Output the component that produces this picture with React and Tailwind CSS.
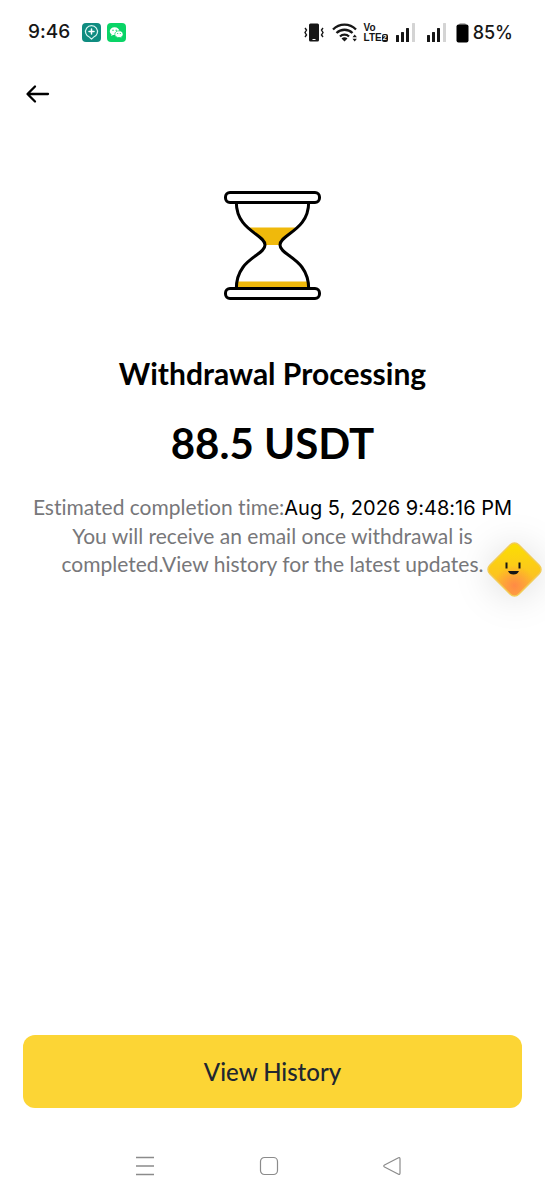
import React from 'react';

const withdrawal = {
    amount: '88.5',
    coin: 'USDT',
    completesAt: 'Aug 5, 2026 9:48:16 PM',
};

function SignalBars() {
    return (
        <svg width="19" height="19" viewBox="0 0 19 19" aria-hidden="true">
            <rect x="0" y="12" width="3" height="7" rx="0.5" fill="#161616" />
            <rect x="5" y="9" width="3" height="10" rx="0.5" fill="#161616" />
            <rect x="10" y="5" width="3" height="14" rx="0.5" fill="#161616" />
            <rect x="16" y="0" width="3" height="19" rx="0.5" fill="#d4d4d4" />
        </svg>
    );
}

function StatusBar() {
    return (
        <div className="flex h-16 items-center justify-between pt-px pl-7 pr-8 font-[Inter,sans-serif] text-[#161616]">
            <div className="flex items-center">
                <span className="text-[19px] font-medium">9:46</span>
                <svg className="ml-3" width="19" height="19" viewBox="0 0 19 19" aria-hidden="true">
                    <rect width="19" height="19" rx="4" fill="#0f8c80" />
                    <path d="M7.6 14.3A6 6 0 1 1 11.4 14.3L9.5 16.2Z" fill="none" stroke="#d9f5f1" strokeWidth="1.2" strokeLinejoin="round" />
                    <path d="M9.5 6v5M7 8.5h5" stroke="#fff" strokeWidth="1.5" strokeLinecap="round" />
                </svg>
                <svg className="ml-1.5" width="19" height="19" viewBox="0 0 19 19" aria-hidden="true">
                    <rect width="19" height="19" rx="4" fill="#09d466" />
                    <path d="M7.6 4.2c-2.8 0-4.8 1.7-4.8 4 0 1.3.7 2.4 1.8 3.1l-.5 1.6 1.9-1c.5.2 1 .2 1.6.2 2.7 0 4.8-1.7 4.8-3.9s-2-4-4.8-4Z" fill="#fff" />
                    <path d="M12 7.800c-2.400 0-4.200 1.500-4.200 3.400s1.800 3.400 4.200 3.400c.5 0 .9-.1 1.300-.2l1.600.8-.4-1.400c1-.6 1.600-1.500 1.600-2.600 0-1.900-1.800-3.400-4.100-3.400Z" fill="#fff" stroke="#09d466" strokeWidth="0.7" />
                    <circle cx="6" cy="7.3" r="0.7" fill="#09d466" />
                    <circle cx="9.2" cy="7.3" r="0.7" fill="#09d466" />
                    <circle cx="10.7" cy="10.5" r="0.6" fill="#09d466" />
                    <circle cx="13.3" cy="10.5" r="0.6" fill="#09d466" />
                </svg>
            </div>

            <div className="flex items-center">
                {/* vibrate */}
                <svg width="20" height="19" viewBox="0 0 20 19" aria-hidden="true">
                    <rect x="5" y="0.5" width="10" height="18" rx="1.5" fill="#161616" />
                    <path d="M8.500 16.500h3" stroke="#fff" strokeWidth="1" />
                    <path d="M1 5l1.500 2L1 9.500 2.500 12 1 14M19 5l-1.500 2L19 9.500 17.500 12 19 14" fill="none" stroke="#161616" strokeWidth="1.4" />
                </svg>
                <svg className="ml-2" width="26" height="19" viewBox="0 0 26 19" aria-hidden="true">
                    <g fill="none" stroke="#161616" strokeWidth="2.3">
                        <path d="M1 6.500a16 16 0 0 1 23 0" />
                        <path d="M4.500 10a11.500 11.500 0 0 1 16 0" />
                        <path d="M8 13.500a6.500 6.500 0 0 1 9 0" />
                    </g>
                    <path d="M9.500 15.500a4 4 0 0 1 6 0L12.500 18.500Z" fill="#161616" />
                    <path d="M20.500 14.300l2.200-2.800 2.200 2.800ZM20.500 15.700l2.200 2.800 2.200-2.800Z" fill="#161616" />
                </svg>
                <div className="ml-1.5 flex flex-col font-['Liberation_Sans',sans-serif] text-[10px] leading-[10px] font-bold">
                    <span>Vo</span>
                    <span className="flex items-center">
                        <span>LTE</span>
                        <span className="rounded-xs bg-[#161616] px-px text-[7px] leading-[8px] text-white">2</span>
                    </span>
                </div>
                <div className="ml-2 flex gap-3">
                    <SignalBars />
                    <SignalBars />
                </div>
                <svg className="ml-2.5" width="13" height="20" viewBox="0 0 13 20" aria-hidden="true">
                    <rect x="3" y="0" width="7" height="4" rx="1.5" fill="#b5b5b5" />
                    <rect x="0.5" y="1.5" width="12" height="18" rx="2" fill="#000" />
                </svg>
                <span className="ml-1 text-lg font-medium">85%</span>
            </div>
        </div>
    );
}

function Hourglass() {
    return (
        <svg width="97" height="109" viewBox="0 0 97 109" aria-hidden="true">
            <path d="M25 36.500H72L64 43Q56 48 56 54H41Q41 48 33 43Z" fill="#f0b90b" />
            <path d="M14 90.500H83L85 98H12Z" fill="#f0b90b" />
            <g fill="none" stroke="#000" strokeWidth="3">
                <path d="M12.300 11C12.300 40 41 43 41 54S12.300 67 12.300 98" />
                <path d="M84.700 11C84.700 40 56 43 56 54S84.700 67 84.700 98" />
                <rect x="1.5" y="1.5" width="94" height="10" rx="4.5" fill="#fff" />
                <rect x="1.5" y="97.5" width="94" height="10" rx="4.5" fill="#fff" />
            </g>
        </svg>
    );
}

function AssistantButton() {
    return (
        <button type="button" aria-label="Assistant" className="absolute top-12 right-0.5 drop-shadow-[0_2px_18px_rgba(0,0,0,0.14)]">
            <svg width="57" height="57" viewBox="0 0 57 57" aria-hidden="true">
                <defs>
                    <linearGradient id="face" x1="0" y1="0" x2="1" y2="1">
                        <stop offset="0.1" stopColor="#fbdc05" />
                        <stop offset="0.6" stopColor="#fcc420" />
                        <stop offset="0.95" stopColor="#fdb040" />
                    </linearGradient>
                    <radialGradient id="glow" cx="0.78" cy="0.78" r="0.5">
                        <stop offset="0" stopColor="#ff8a45" />
                        <stop offset="1" stopColor="#ff8a45" stopOpacity="0" />
                    </radialGradient>
                </defs>
                <g transform="rotate(45 28.5 28.5)">
                    <rect x="8" y="8" width="41" height="41" rx="6" fill="url(#face)" />
                    <rect x="8" y="8" width="41" height="41" rx="6" fill="url(#glow)" stroke="#f2cc55" strokeWidth="1.5" />
                </g>
                <path d="M20.500 21.500v6M33.500 21.500v6" stroke="#161616" strokeWidth="2" />
                <path d="M22 30H33Q31.500 33.500 27.500 33.500T22 30Z" fill="#161616" />
            </svg>
        </button>
    );
}

function NavBar() {
    return (
        <nav className="flex h-[91px] items-center justify-center gap-[104px] pt-6 pr-2 text-[#8b8b8b]">
            <button type="button" aria-label="Recent apps">
                <svg width="20" height="20" viewBox="0 0 20 20" stroke="currentColor" strokeWidth="1.3">
                    <path d="M1 1.500h18M1 10h18M1 18.500h18" />
                </svg>
            </button>
            <button type="button" aria-label="Home">
                <svg width="20" height="20" viewBox="0 0 20 20" fill="none" stroke="currentColor" strokeWidth="1.2">
                    <rect x="1.5" y="1.5" width="17" height="17" rx="4" />
                </svg>
            </button>
            <button type="button" aria-label="Back">
                <svg width="20" height="20" viewBox="0 0 20 20" fill="none" stroke="currentColor" strokeWidth="1.2" strokeLinejoin="round">
                    <path d="M15.500 1.800Q17 1.200 17 3V17Q17 18.800 15.500 18.200L1.500 11Q0 10 1.500 9Z" />
                </svg>
            </button>
        </nav>
    );
}

export default function App() {
    return (
        <div className="flex min-h-screen flex-col bg-white font-[Lato,sans-serif] text-black [font-variant-ligatures:none]">
            <StatusBar />

            <header className="flex h-15 items-center pl-6">
                <button type="button" aria-label="Go back">
                    <svg width="26" height="20" viewBox="0 0 26 20" fill="none" stroke="#000" strokeWidth="2.3" strokeLinecap="round" strokeLinejoin="round">
                        <path d="M24 10H4M11 2.500L3.500 10 11 17.500" />
                    </svg>
                </button>
            </header>

            <main className="flex flex-1 flex-col items-center pt-[67px] text-center">
                <Hourglass />
                <h1 className="mt-[53px] text-3xl leading-10 font-bold">Withdrawal Processing</h1>
                <p className="mt-[26px] text-[42px] leading-12 font-bold">
                    {withdrawal.amount} {withdrawal.coin}
                </p>
                <div className="relative mt-[26px] w-full px-6 text-[21px] leading-7 text-[#77777a]">
                    <p>
                        Estimated completion time:
                        <span className="font-[Inter,sans-serif] text-xl text-black">{withdrawal.completesAt}</span>
                    </p>
                    <p className="px-6">You will receive an email once withdrawal is completed.View history for the latest updates.</p>
                    <AssistantButton />
                </div>
            </main>

            <footer className="px-[23px]">
                <button type="button" className="h-[73px] w-full rounded-xl bg-[#fcd535] text-2xl font-medium text-[#202630]">
                    View History
                </button>
            </footer>
            <NavBar />
        </div>
    );
}
